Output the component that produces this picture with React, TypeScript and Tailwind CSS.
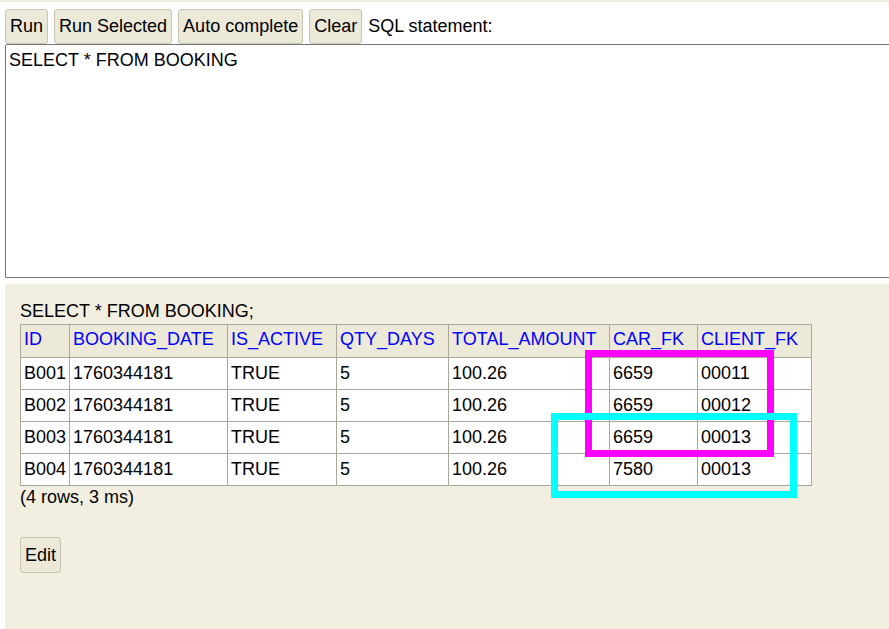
export default function App() {
  const buttons = ["Run", "Run Selected", "Auto complete", "Clear"];
  const cols = [
    { name: "ID", w: "w-[49px]" },
    { name: "BOOKING_DATE", w: "w-[158px]" },
    { name: "IS_ACTIVE", w: "w-[109px]" },
    { name: "QTY_DAYS", w: "w-[112px]" },
    { name: "TOTAL_AMOUNT", w: "w-[161px]" },
    { name: "CAR_FK", w: "w-[88px]" },
    { name: "CLIENT_FK", w: "w-[114px]" },
  ];
  const rows = [
    ["B001", "1760344181", "TRUE", "5", "100.26", "6659", "00011"],
    ["B002", "1760344181", "TRUE", "5", "100.26", "6659", "00012"],
    ["B003", "1760344181", "TRUE", "5", "100.26", "6659", "00013"],
    ["B004", "1760344181", "TRUE", "5", "100.26", "7580", "00013"],
  ];

  return (
    <div className="relative w-[889px] h-[629px] overflow-hidden bg-white text-[18px] leading-[21px] text-black font-['Liberation_Sans',Arial,sans-serif]">
      <div className="h-[2px] bg-[#f0ecdc]" />

      {/* toolbar */}
      <div className="flex items-center pl-[5px] pt-[6px] h-[42px]">
        {buttons.map((b, i) => (
          <button
            key={b}
            className={`h-[35px] px-[4px] bg-[#ece9d8] border border-[#c9c5b4] rounded-[3px] ${
              i === 0 ? "" : "ml-[6px]"
            }`}
          >
            {b}
          </button>
        ))}
        <span className="ml-[6px]">SQL statement:</span>
      </div>

      {/* editor */}
      <div className="ml-[5px] w-[900px] h-[234px] border border-[#767676] rounded-tl-[2px] bg-white pl-[3px] pt-[5px]">
        SELECT * FROM BOOKING
      </div>

      {/* results */}
      <div className="mt-[6px] ml-[5px] h-[400px] bg-[#f2eee0] pl-[15px] pt-[17px]">
        <div className="h-[23px]">SELECT * FROM BOOKING;</div>
        <table className="border-collapse border border-[#aca899]">
          <thead>
            <tr className="h-[33px] bg-[#ece9d8]">
              {cols.map((c) => (
                <th
                  key={c.name}
                  className={`${c.w} border border-[#aca899] px-[3px] pb-[3px] text-left font-normal text-[#0000ff] align-middle`}
                >
                  {c.name}
                </th>
              ))}
            </tr>
          </thead>
          <tbody>
            {rows.map((r) => (
              <tr key={r[0]} className="h-[32px] bg-white">
                {r.map((v, j) => (
                  <td key={j} className="border border-[#aca899] px-[3px] align-middle">
                    {v}
                  </td>
                ))}
              </tr>
            ))}
          </tbody>
        </table>
        <div className="mt-[1px]">(4 rows, 3 ms)</div>
        <button className="mt-[29px] h-[36px] px-[4px] bg-[#ece9d8] border border-[#c9c5b4] rounded-[3px]">
          Edit
        </button>
      </div>

      {/* highlight boxes */}
      <div className="absolute left-[585px] top-[350px] w-[189px] h-[107px] border-[7px] border-[#ff00ff]" />
      <div className="absolute left-[551px] top-[413px] w-[246px] h-[85px] border-[7px] border-[#00ffff]" />
    </div>
  );
}
